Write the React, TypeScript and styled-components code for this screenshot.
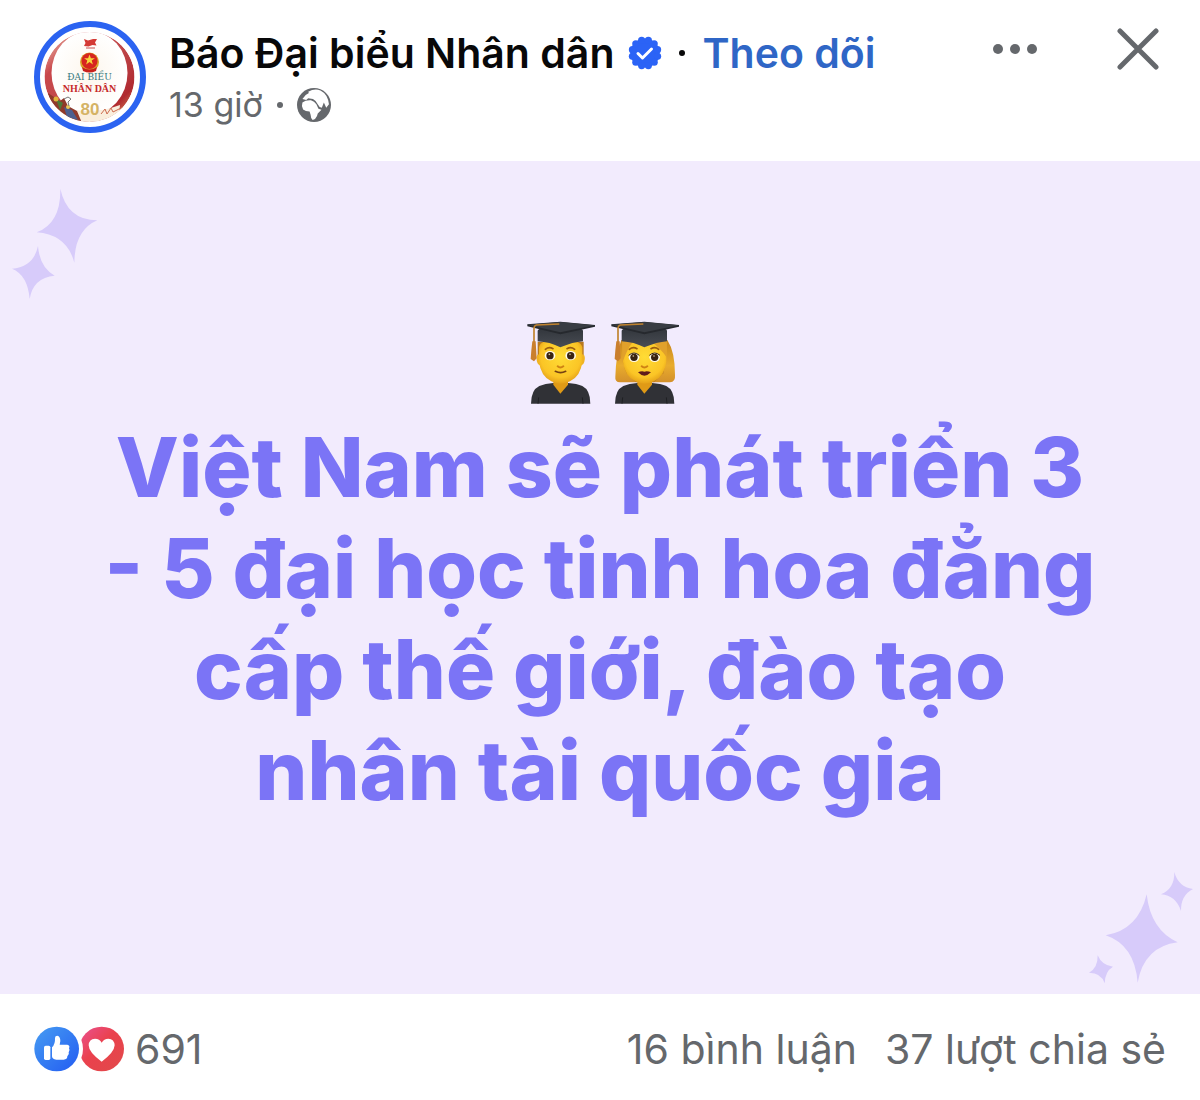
import React from "react";
import styled, { createGlobalStyle } from "styled-components";

const GlobalStyle = createGlobalStyle`
  *, *::before, *::after { box-sizing: border-box; }
  body {
    margin: 0;
    background: #ffffff;
    font-family: Inter, Roboto, "Liberation Sans", sans-serif;
  }
`;

const Post = styled.article`
  display: flex;
  flex-direction: column;
  width: 100%;
  background: #ffffff;
`;

const Header = styled.header`
  display: flex;
  align-items: flex-start;
  gap: 23px;
  padding: 21px 41px 28px 34px;
`;

const AvatarLink = styled.a`
  display: block;
  flex: none;
  width: 112px;
  height: 112px;
`;

const Byline = styled.div`
  flex: 1;
  min-width: 0;
  padding-top: 8px;
`;

const NameRow = styled.div`
  display: flex;
  align-items: center;
  line-height: 48px;
  font-size: 41px;
  white-space: nowrap;
`;

const Name = styled.a`
  color: #080809;
  font-weight: 600;
  text-decoration: none;
`;

const Dot = styled.span<{ $size: number; $space: number; $color: string }>`
  flex: none;
  width: ${(p) => p.$size}px;
  height: ${(p) => p.$size}px;
  margin: 0 ${(p) => p.$space}px;
  border-radius: 50%;
  background: ${(p) => p.$color};
`;

const Icon = styled.svg<{ $size: number }>`
  display: block;
  flex: none;
  width: ${(p) => p.$size}px;
  height: ${(p) => p.$size}px;
`;

const Badge = styled(Icon)`
  margin-left: 14px;
`;

const Follow = styled.button`
  padding: 0;
  border: 0;
  background: none;
  color: #2f66c6;
  font: inherit;
  font-weight: 600;
  cursor: pointer;
`;

const Meta = styled.div`
  display: flex;
  align-items: center;
  padding-top: 8px;
  color: #65686c;
  font-size: 34px;
  line-height: 40px;
`;

const Actions = styled.div`
  display: flex;
  align-items: center;
  gap: 80px;
  padding-top: 6px;
`;

const IconButton = styled.button`
  padding: 0;
  border: 0;
  background: none;
  color: #65686c;
  cursor: pointer;
`;

const Banner = styled.section`
  position: relative;
  display: flex;
  flex-direction: column;
  align-items: center;
  padding: 160px 40px 173px;
  background: #f2ebfd;
`;

const Sparkles = styled.svg<{ $corner: "top" | "bottom" }>`
  position: absolute;
  ${(p) => (p.$corner === "top" ? "top: 9px; left: 0;" : "bottom: -6px; right: 0;")}
  fill: #d7cbfa;
`;

const Emojis = styled.div`
  display: flex;
  gap: 16px;
  padding: 0 0 12px 6px;
`;

const Headline = styled.h1`
  margin: 0;
  color: #7b74f6;
  font-size: 82px;
  font-weight: 800;
  line-height: 101px;
  text-align: center;
`;

const Line = styled.span`
  display: block;
`;

const Footer = styled.footer`
  display: flex;
  align-items: center;
  justify-content: space-between;
  padding: 30px 34px 26px;
  color: #65686c;
  font-size: 41px;
  line-height: 50px;
`;

const Group = styled.div<{ $gap: number }>`
  display: flex;
  align-items: center;
  gap: ${(p) => p.$gap}px;
`;

const Count = styled.a`
  color: inherit;
  text-decoration: none;
  white-space: nowrap;
`;

const Reactions = styled.svg`
  display: block;
  width: 90px;
  height: 46px;
`;

const Avatar = () => (
  <svg width="112" height="112" viewBox="20 10 112 112" role="img" aria-label="Báo Đại biểu Nhân dân">
    <defs>
      <linearGradient id="rim" x1="0" y1="0" x2="1" y2="1">
        <stop offset="0" stopColor="#f3d9c4" />
        <stop offset="0.25" stopColor="#c9474b" />
        <stop offset="0.5" stopColor="#c04a4c" />
        <stop offset="0.8" stopColor="#b02a30" />
        <stop offset="1" stopColor="#e6b36a" />
      </linearGradient>
      <radialGradient id="paper">
        <stop offset="0" stopColor="#fdf6ec" />
        <stop offset="1" stopColor="#ffffff" />
      </radialGradient>
      <clipPath id="disc"><circle cx="75.500" cy="66" r="45" /></clipPath>
    </defs>
    <circle cx="76" cy="66" r="53" fill="#fff" stroke="#2b63f1" strokeWidth="6" />
    <g clipPath="url(#disc)">
      <circle cx="75.500" cy="66" r="45" fill="url(#rim)" />
      <ellipse cx="75.500" cy="62" rx="38" ry="42" fill="url(#paper)" />
      <path d="M44 94 Q74 106 106 94 L104 114 H48Z" fill="#faeedd" />
      <path d="M70 28l4 1.500 5-1.500 4 0-2 3.500 1.500 3-4-.5-4 1.500-4.500-.5 1.500-3z" fill="#d43a35" />
      <path d="M72 37h9" stroke="#dd8888" strokeWidth="1.500" />
      <circle cx="75.500" cy="51" r="9.500" fill="#d9a62a" />
      <circle cx="75.500" cy="50" r="8" fill="#d7251f" />
      <path d="M75.500 43.500l1.400 3.800h4l-3.200 2.300 1.200 3.900-3.400-2.400-3.400 2.400 1.200-3.900-3.200-2.300h4z" fill="#f7d43b" />
      <path d="M68 56q7.500 5 15 0l-1 4q-6.500 3-13 0z" fill="#c81f1c" />
      <path d="M34 82l12 8 4-3 4 8 9 5 5 12-14 2-14-10z" fill="#8f3a2b" />
      <path d="M42 88l7 4-3 7z" fill="#4d7a39" />
      <path d="M50 96l8 3 6 10-11-3z" fill="#4c5f8f" />
      <circle cx="42" cy="88" r="2.500" fill="#e0b43b" />
      <circle cx="54" cy="96" r="2" fill="#e7c85a" />
      <path d="M50 88l4-2 3 2-3 3 1 4" fill="none" stroke="#777777" />
      <path d="M87 103l4-5 2 5 4-6 2 4 10-5" fill="none" stroke="#cc6a4e" />
    </g>
    <text x="75.500" y="69" textAnchor="middle" fontFamily="DejaVu Serif, serif" fontSize="9" fill="#35777c">ĐẠI BIỂU</text>
    <text x="75.500" y="81" textAnchor="middle" fontFamily="Liberation Serif, serif" fontSize="10" fontWeight="700" fill="#c62a2b">NHÂN DÂN</text>
    <text x="76" y="104" textAnchor="middle" fontFamily="Liberation Sans, sans-serif" fontSize="17" fontWeight="700" fill="#d5b365">80</text>
  </svg>
);

const Verified = () => (
  <Badge $size={34} viewBox="0 0 34 34" role="img" aria-label="Đã xác minh">
    <g fill="#2b63f6">
      <circle cx="17" cy="17" r="14.500" />
      {Array.from({ length: 12 }, (_, i) => {
        const a = ((i * 30 + 15) * Math.PI) / 180;
        return <circle key={i} cx={17 + 13 * Math.cos(a)} cy={17 + 13 * Math.sin(a)} r="3.600" />;
      })}
    </g>
    <path d="M10 17.500l4.500 4.500 9-9" fill="none" stroke="#fff" strokeWidth="3" strokeLinecap="round" strokeLinejoin="round" />
  </Badge>
);

const Globe = () => (
  <Icon $size={34} viewBox="411 204 100 100" role="img" aria-label="Công khai">
    <circle cx="461" cy="254" r="50" fill="#65686c" />
    <path d="M427 236 Q434 224 446 219 L444 215 Q462 205 480 211 Q502 222 505 252 L497 262 L490 247 L484 262 Q477 262 473 253 Q468 241 458 236 L444 234 L438 239z" fill="#fff" />
    <path d="M427 247 Q436 239 452 240 Q462 243 468 252 L474 265 L483 268 L472 279 Q471 288 464 295 L457 298 Q451 292 451 283 L448 273 Q436 273 429 267 Q423 258 427 247z" fill="#fff" />
  </Icon>
);

const TopSparkles = () => (
  <Sparkles $corner="top" width="120" height="150" viewBox="0 0 360 450" aria-hidden="true">
    <path d="M181 56Q201 150 292 151Q224 180 223 278Q201 194 110 187Q183 160 181 56z" />
    <path d="M114 228Q119 292 164 317Q99 323 89 387Q83 315 36 296Q101 291 114 228z" />
  </Sparkles>
);

const BottomSparkles = () => (
  <Sparkles $corner="bottom" width="130" height="140" viewBox="0 0 390 420" aria-hidden="true">
    <path d="M230 103Q242 210 323 247Q222 260 203 368Q194 255 107 226Q205 210 230 103z" />
    <path d="M313 36Q325 81 369 87Q332 106 333 153Q318 107 273 103Q314 86 313 36z" />
    <path d="M83 286Q96 317 129 320Q105 334 104 370Q94 338 57 338Q84 324 83 286z" />
  </Sparkles>
);

const Graduate = ({ woman = false }: { woman?: boolean }) => {
  const id = woman ? "w" : "m";
  return (
    <svg width="68" height="84" viewBox="51 34 204 250" role="img" aria-label={woman ? "Nữ sinh tốt nghiệp" : "Nam sinh tốt nghiệp"}>
      <defs>
        <radialGradient id={`face-${id}`} cx="0.5" cy="0.4" r="0.65">
          <stop offset="0" stopColor="#ffdc35" />
          <stop offset="0.7" stopColor="#fbc526" />
          <stop offset="1" stopColor="#dc9414" />
        </radialGradient>
        <linearGradient id={`hair-${id}`} x1="0" y1="0" x2="0" y2="1">
          <stop offset="0" stopColor="#c7851c" />
          <stop offset="0.6" stopColor="#e9ac2d" />
          <stop offset="1" stopColor="#d3902b" />
        </linearGradient>
        <linearGradient id={`cap-${id}`} x1="0" y1="0" x2="0" y2="1">
          <stop offset="0" stopColor="#30343a" />
          <stop offset="1" stopColor="#484c53" />
        </linearGradient>
      </defs>
      {woman && <path d="M82 90Q66 132 64 200Q62 216 78 217H228Q245 216 243 195Q243 125 220 90z" fill={`url(#hair-${id})`} />}
      {woman && <path d="M90 110Q84 165 98 190L126 217H180L208 190Q218 150 212 112z" fill="#a8651b" opacity=".6" />}
      <path d="M63 281Q63 240 88 228Q105 221 130 219H174Q201 221 217 228Q241 240 241 281z" fill="#303136" />
      <path d="M84 281L86 262M219 281L217 262" stroke="#1f2023" strokeWidth="3" />
      <path d="M130 200H174V224L151 251L130 224z" fill="#e09a16" />
      {!woman && <path d="M83 95H221V145H83z" fill="#b8781d" />}
      {!woman && <path d="M82 134q-6 12 2 28l8 6V132zM222 134q6 12-2 28l-8 6V132z" fill="#f0b322" />}
      <path d="M87 112Q90 88 151 88Q212 88 217 112V155Q212 198 180 214Q151 228 124 214Q92 198 87 155z" fill={`url(#face-${id})`} />
      {woman && <path d="M84 90Q98 91 116 96Q99 118 85 158zM168 92Q199 113 218 142L219 92z" fill="#e1a12b" />}
      <path d="M106 118q11-9 23-2M171 116q12-7 23 2" fill="none" stroke="#9b5d12" strokeWidth="5" strokeLinecap="round" />
      {[120, 182].map((x) => (
        <g key={x}>
          <ellipse cx={x} cy={woman ? 142 : 137} rx="16" ry="14" fill="#fffbe9" />
          <circle cx={x} cy={woman ? 142 : 137} r="11" fill="#382312" />
          <circle cx={x - 2} cy={woman ? 138 : 133} r="2.500" fill="#d9c7a2" />
        </g>
      ))}
      {woman && <path d="M104 136q16-14 32 0M166 136q16-14 32 0" fill="none" stroke="#322010" strokeWidth="3" />}
      <path d="M143 169q8 7 17 0" fill="none" stroke="#ce8213" strokeWidth="6" strokeLinecap="round" />
      {woman ? (
        <path d="M132 187Q143 182 151 185Q160 182 171 187Q151 207 132 187z" fill="#601c1b" />
      ) : (
        <path d="M136 184q16 8 31 0" fill="none" stroke="#754112" strokeWidth="5" strokeLinecap="round" />
      )}
      <path d="M83 62Q86 50 151 50T219 62V94Q189 96 151 112Q120 96 83 94z" fill={`url(#cap-${id})`} />
      <path d="M52 43L151 35L255 45V50L151 73L52 49z" fill="#26292e" />
      <path d="M52 44L151 36L254 46L151 67z" fill="#393d43" />
      <path d="M148 42L79 45Q71 47 72 60V98" fill="none" stroke="#c0822d" strokeWidth="5" />
      <path d="M67 94h10q1 18 3 51l-8 9-10-7q2-30 5-53z" fill="#ca7f2e" />
    </svg>
  );
};

const ReactionIcons = () => (
  <Reactions viewBox="40 46 270 138" role="img" aria-label="Thích, Yêu thích">
    <defs>
      <linearGradient id="like" x1="0" y1="0" x2="1" y2="1">
        <stop offset="0" stopColor="#469cf2" />
        <stop offset="1" stopColor="#235cf2" />
      </linearGradient>
      <linearGradient id="love" x1="0" y1="0" x2="1" y2="1">
        <stop offset="0" stopColor="#ea5293" />
        <stop offset="0.45" stopColor="#ea414d" />
        <stop offset="1" stopColor="#e14a4a" />
      </linearGradient>
    </defs>
    <circle cx="243" cy="115" r="67" fill="url(#love)" />
    <circle cx="108" cy="115" r="79" fill="#fff" />
    <circle cx="108" cy="115" r="67" fill="url(#like)" />
    <rect x="70" y="105" width="19" height="43" rx="5" fill="#fff" />
    <path d="M94 110Q104 101 103 82Q103 75 110 75Q119 77 119 91L117 102H140Q149 104 145 113Q149 119 144 125Q147 132 140 137Q140 147 129 147H107Q94 146 94 137z" fill="#fff" />
    <path d="M243 153Q204 125 204 104Q205 84 223 84Q237 84 243 96Q250 84 263 84Q281 85 282 104Q281 125 243 153z" fill="#fff" />
  </Reactions>
);

export default function App() {
  return (
    <Post>
      <GlobalStyle />
      <Header>
        <AvatarLink href="#page"><Avatar /></AvatarLink>
        <Byline>
          <NameRow>
            <Name href="#page">Báo Đại biểu Nhân dân</Name>
            <Verified />
            <Dot $size={6} $space={17} $color="#080809" />
            <Follow type="button">Theo dõi</Follow>
          </NameRow>
          <Meta>
            <span>13 giờ</span>
            <Dot $size={6} $space={14} $color="#65686c" />
            <Globe />
          </Meta>
        </Byline>
        <Actions>
          <IconButton type="button" aria-label="Tùy chọn khác">
            <Icon $size={44} viewBox="0 0 44 44" fill="currentColor">
              <circle cx="5" cy="22" r="5" />
              <circle cx="22" cy="22" r="5" />
              <circle cx="39" cy="22" r="5" />
            </Icon>
          </IconButton>
          <IconButton type="button" aria-label="Đóng">
            <Icon $size={42} viewBox="0 0 42 42" fill="none" stroke="currentColor" strokeWidth="5" strokeLinecap="round">
              <path d="M3 3L39 39M39 3L3 39" />
            </Icon>
          </IconButton>
        </Actions>
      </Header>
      <Banner>
        <TopSparkles />
        <Emojis>
          <Graduate />
          <Graduate woman />
        </Emojis>
        <Headline>
          <Line>Việt Nam sẽ phát triển 3</Line>
          <Line>- 5 đại học tinh hoa đẳng</Line>
          <Line>cấp thế giới, đào tạo</Line>
          <Line>nhân tài quốc gia</Line>
        </Headline>
        <BottomSparkles />
      </Banner>
      <Footer>
        <Group $gap={11}>
          <ReactionIcons />
          <Count href="#reactions">691</Count>
        </Group>
        <Group $gap={28}>
          <Count href="#comments">16 bình luận</Count>
          <Count href="#shares">37 lượt chia sẻ</Count>
        </Group>
      </Footer>
    </Post>
  );
}
